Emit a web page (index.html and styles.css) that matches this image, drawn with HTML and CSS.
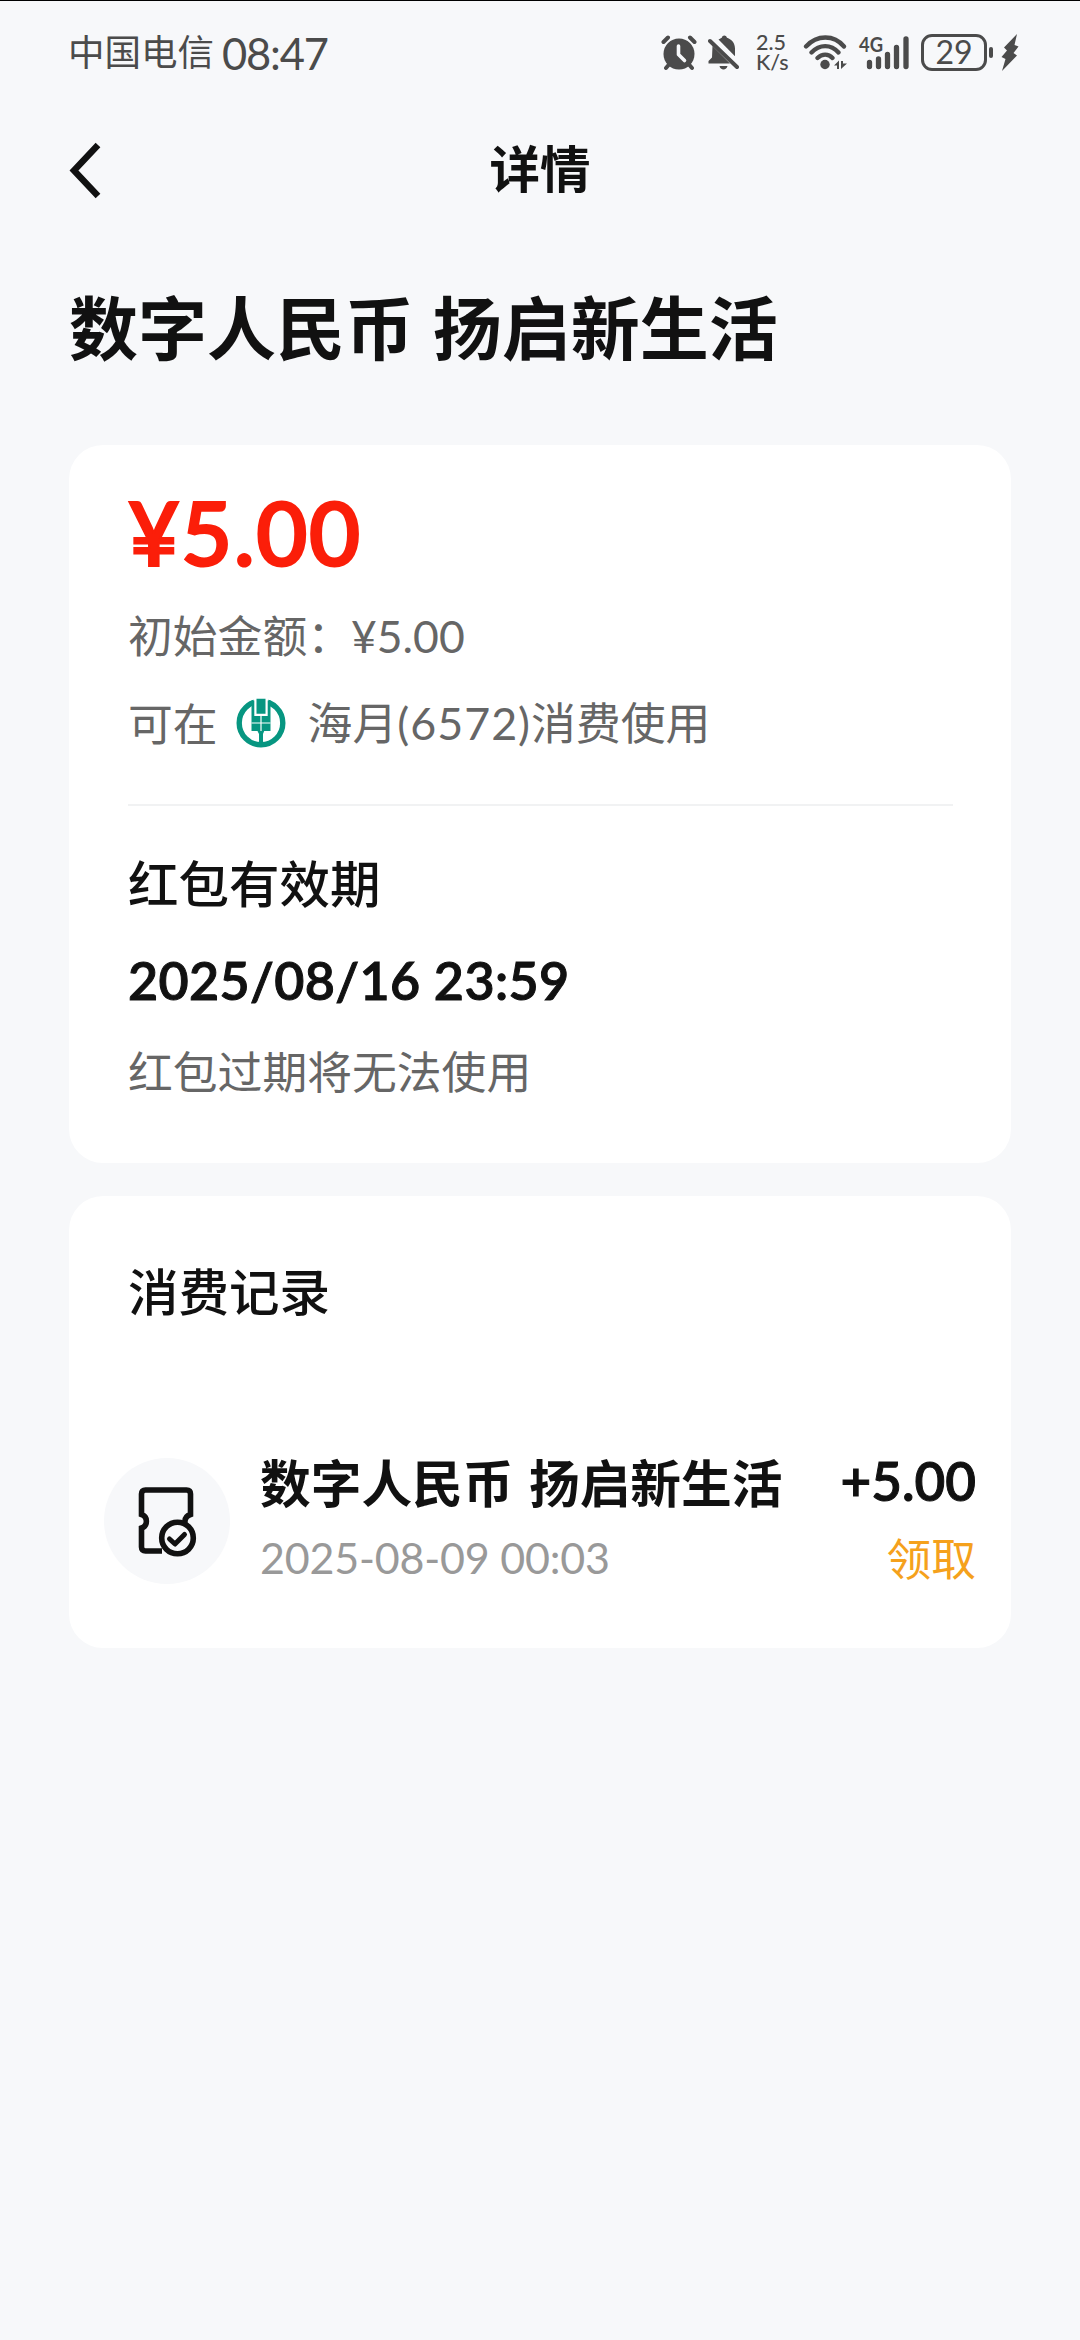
FILE: index.html
```html
<!DOCTYPE html>
<html lang="zh-CN">
<head>
<meta charset="utf-8">
<title>详情</title>
<link rel="stylesheet" href="styles.css">
</head>
<body>
<div class="screen">
  <div class="status">
    <span class="carrier">中国电信</span>
    <span class="clock num">08:47</span>
    <div class="indicators">
      <svg class="alarm" width="36" height="36" viewBox="0 0 36 36">
        <g fill="none" stroke="currentColor" stroke-width="4" stroke-linecap="round"><path d="M2.5 7 7 2.5M33.500 7 29 2.500M8 29.500 5 33M28 29.500 31 33"/></g>
        <circle cx="18" cy="19" r="15.500" fill="currentColor"/>
        <path d="M17.500 11v8.500l6 6" fill="none" stroke="#f7f8fa" stroke-width="3.600" stroke-linecap="round" stroke-linejoin="round"/>
      </svg>
      <svg class="bell" width="32" height="36" viewBox="0 0 32 36">
        <path fill="currentColor" d="M10.500 4.500C12 3.500 13 3 13.800 2.700 14.500-.300 18-.300 19 2.700c5 1.700 8 5.500 8 11v7.500ZM4.500 11 22 28.500H.500v-2.500l3.500-3.500ZM11.500 31h8c-.7 4.600-7.300 4.600-8 0Z"/>
        <path d="M2 6 29 32" stroke="currentColor" stroke-width="4" stroke-linecap="round"/>
      </svg>
      <span class="speed num"><span>2.5</span><span>K/s</span></span>
      <svg class="wifi" width="46" height="36" viewBox="0 0 46 36">
        <g fill="none" stroke="currentColor" stroke-width="4.300" stroke-linecap="round"><path d="M3 11.500C14-.500 31-.500 41 11.500M8.500 17.500C16.500 9 28 9 35.500 17.500M14.500 23C19 18.500 25.500 18.500 29.500 23"/></g>
        <circle cx="22" cy="29.500" r="4.700" fill="currentColor"/>
        <path fill="currentColor" d="M31 30.500 36 25.500v8.500h-2v-3.500ZM38 26h2v2.500h4L38 34Z"/>
      </svg>
      <svg class="signal" width="52" height="36" viewBox="0 0 52 36">
        <text class="gen" x="0" y="17" textLength="24" lengthAdjust="spacingAndGlyphs">4G</text>
        <g stroke="currentColor" stroke-width="5.300" stroke-linecap="round"><path d="M10.500 27.500v4M19.500 24v7.500M28.500 19.500v12M37.500 12.500v19M47 4v27.500"/></g>
      </svg>
      <span class="battery num">29</span>
      <span class="cap"></span>
      <svg class="bolt" width="18" height="38" viewBox="0 0 18 38"><path fill="currentColor" d="M16 0 3 13.500 6 16.500 .5 23 4.500 25 1 37 16 21.500 12.500 19 17.500 12.500 13.500 11Z"/></svg>
    </div>
  </div>

  <header class="nav">
    <svg class="back" width="36" height="58" viewBox="0 0 36 58"><path d="M29 3 5 28.500 29 54" fill="none" stroke="currentColor" stroke-width="6.500"/></svg>
    <span class="nav-title">详情</span>
  </header>

  <h1 class="title">数字人民币 扬启新生活</h1>

  <section class="card summary">
    <div class="amount num">¥5.00</div>
    <div class="line initial">初始金额：<span class="num initial-value">¥5.00</span></div>
    <div class="line usable">
      <span>可在</span>
      <svg class="bank" width="50" height="50" viewBox="0 0 50 50">
        <circle cx="25" cy="25" r="21.800" fill="none" stroke="#079681" stroke-width="5.400"/>
        <path fill="#fff" d="M17.500 0h15v12h-15Z"/>
        <path fill="#079681" d="M20.500.800h9v15h-9ZM15.500 2.500h2.800V18h13.400V2.500h2.800V33H28.200L27 36v11h-4V36L21.500 33h-6Z"/>
        <path d="M25 17v16M15.500 25h19" stroke="#fff" stroke-width="1.200"/>
      </svg>
      <span>海月<span class="num card-no">(6572)</span>消费使用</span>
    </div>
    <div class="divider"></div>
    <div class="heading">红包有效期</div>
    <div class="deadline num">2025/08/16 23:59</div>
    <div class="line note">红包过期将无法使用</div>
  </section>

  <section class="card records">
    <div class="heading">消费记录</div>
    <div class="record">
      <div class="record-icon">
        <svg width="60" height="72" viewBox="0 0 60 72">
          <g fill="none" stroke="currentColor" stroke-width="5.600">
            <path d="M25 66H8.500Q4.500 66 4.500 62V43C11 41 11 31.500 4.500 29.500V9Q4.500 5 8.500 5H49.500Q53.500 5 53.500 9V29.500C49 31 47.500 34 48 38"/>
            <circle cx="40.500" cy="53" r="15.800"/>
            <path d="M32.500 54 38 59 47.500 49.500" stroke-width="5" stroke-linecap="round" stroke-linejoin="round"/>
          </g>
        </svg>
      </div>
      <div class="record-main">
        <div class="record-title">数字人民币 扬启新生活</div>
        <div class="record-date num">2025-08-09 00:03</div>
      </div>
      <div class="record-side">
        <div class="record-amount num">+5.00</div>
        <div class="record-kind">领取</div>
      </div>
    </div>
  </section>
</div>
</body>
</html>
```
FILE: styles.css
```css
* { box-sizing: border-box; }
body {
  margin: 0;
  background: #f7f8fa;
  color: #111;
  font-family: "Noto Sans CJK SC", sans-serif;
}
.screen {
  width: 1080px;
  height: 2340px;
  border-top: 1px solid #000;
  overflow: hidden;
}
.num { font-family: Lato, "Noto Sans CJK SC", sans-serif; }

.status {
  display: flex;
  align-items: center;
  height: 103px;
  padding-left: 68px;
  color: #4b4b4b;
  white-space: nowrap;
}
.carrier { margin-bottom: 4px; font-size: 36.500px; line-height: 52px; }
.clock { width: 110px; margin-left: 8px; font-size: 43.500px; line-height: 52px; letter-spacing: -1.200px; }
.indicators { display: flex; align-items: center; width: 359px; margin-left: auto; margin-right: 60px; }
.indicators svg, .battery, .cap { flex: none; }
.bell { margin-left: 11px; }
.speed {
  display: flex;
  flex-direction: column;
  gap: 1px;
  width: 34px;
  margin-left: 16px;
  font-size: 21.500px;
  font-weight: 500;
  line-height: 19px;
}
.wifi { margin-left: 13px; }
.signal { margin-left: 10px; overflow: visible; }
.gen { font: 700 20px Lato, sans-serif; fill: currentColor; }
.battery {
  width: 66px;
  height: 37px;
  margin-left: 10px;
  border: 3px solid;
  border-radius: 11px;
  font-size: 32px;
  line-height: 29px;
  text-align: center;
}
.cap { width: 4px; height: 11px; margin-left: 2px; border-radius: 2px; background: currentColor; }
.bolt { margin-left: 8px; }

.nav {
  display: grid;
  grid-template-columns: 180px 1fr 180px;
  align-items: center;
  height: 134px;
}
.back { margin-left: 69px; }
.nav-title { margin-bottom: 10px; font-size: 50.500px; font-weight: 700; line-height: 60px; text-align: center; }

.title {
  margin: 45px 0 0 69px;
  font-size: 69px;
  font-weight: 700;
  line-height: 84px;
  word-spacing: 3px;
  white-space: nowrap;
}

.card {
  margin: 0 69px;
  padding: 0 58px 0 59px;
  border-radius: 34px;
  background: #fff;
}
.summary { height: 718px; margin-top: 78px; padding-top: 35px; }
.amount { height: 104px; font-size: 89px; font-weight: 600; line-height: 104px; letter-spacing: 1.200px; color: #fb1e09; -webkit-text-stroke: 2px currentColor; }
.line { height: 60px; font-size: 44.800px; line-height: 60px; color: #666; white-space: nowrap; }
.initial { margin-top: 20px; }
.initial-value { margin-left: -1px; font-size: 44.500px; }
.usable { display: flex; align-items: center; margin-top: 28px; }
.usable > span { margin-bottom: 1px; }
.bank { margin: 1px 22px 0 18px; }
.card-no { letter-spacing: 1px; }
.divider { height: 2px; margin-top: 52px; background: #f1f2f3; }
.heading { height: 64px; font-size: 50.500px; font-weight: 500; line-height: 64px; }
.summary .heading { margin-top: 43px; }
.deadline { height: 60px; margin-top: 37px; font-size: 52px; font-weight: 600; line-height: 60px; letter-spacing: .35px; white-space: nowrap; -webkit-text-stroke: 1px currentColor; }
.note { margin-top: 30px; }

.records { height: 452px; margin-top: 33px; padding: 61px 35px 0 35px; }
.records .heading { padding-left: 24px; }
.record { display: flex; height: 127px; margin-top: 137px; }
.record-icon {
  display: flex;
  align-items: center;
  justify-content: center;
  width: 126px;
  height: 126px;
  border-radius: 50%;
  background: #f7f8fa;
}
.record-main { flex: 1; margin: -3px 0 0 30px; white-space: nowrap; }
.record-title { height: 52px; font-size: 50.700px; font-weight: 700; line-height: 52px; word-spacing: 4px; }
.record-date { height: 50px; margin-top: 26px; font-size: 43px; line-height: 50px; letter-spacing: -.2px; color: #999; }
.record-side { text-align: right; }
.record-amount { height: 52px; font-size: 53px; font-weight: 600; line-height: 46px; -webkit-text-stroke: 1px currentColor; }
.record-kind { height: 50px; margin-top: 22px; font-size: 44.800px; line-height: 50px; color: #f5a11c; }
```
